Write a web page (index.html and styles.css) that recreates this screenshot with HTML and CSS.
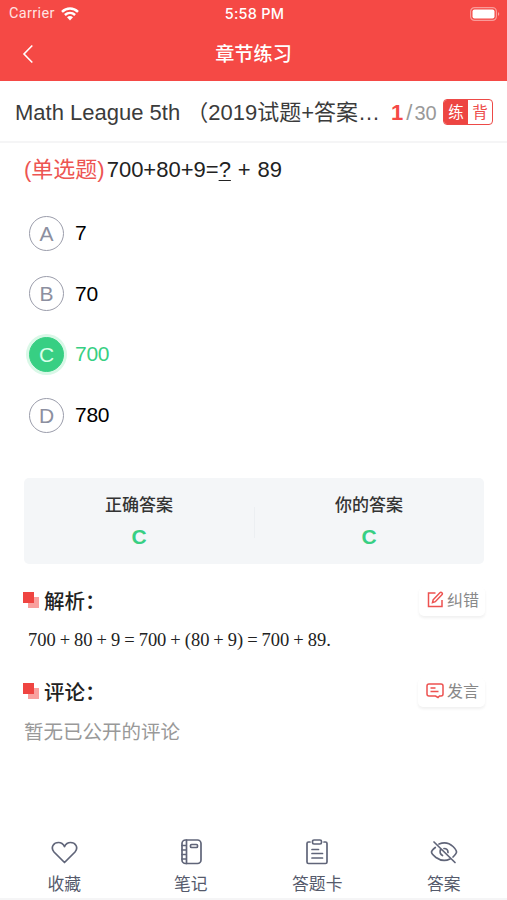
FILE: index.html
```html
<!DOCTYPE html>
<html lang="zh-CN">
<head>
<meta charset="utf-8">
<title>章节练习</title>
<link rel="stylesheet" href="styles.css">
</head>
<body>
<header class="header">
  <div class="status">
    <div class="carrier"><span>Carrier</span>
      <svg class="wifi" width="18" height="14" viewBox="0 0 18 14" fill="none" stroke="#fff" stroke-width="2.5"><path d="M1 4.800C5.600.4 12.400.4 17 4.800M3.900 8C7 5.200 11 5.200 14.100 8"/><path d="M9 13.500 6 10.300Q9 7.900 12 10.300Z" fill="#fff" stroke="none"/></svg>
    </div>
    <div class="clock">5:58 PM</div>
    <div class="power"><svg width="30" height="14" viewBox="0 0 30 14"><rect x=".6" y=".6" width="25.800" height="12.800" rx="4" fill="none" stroke="#fff" stroke-opacity=".45" stroke-width="1.200"/><rect x="2.500" y="2.500" width="22" height="9" rx="2" fill="#fff"/><path d="M28 5Q30.500 7 28 9Z" fill="#fff" opacity=".5"/></svg></div>
  </div>
  <div class="nav">
    <svg class="back" width="12" height="20" viewBox="0 0 12 20" fill="none" stroke="#fff" stroke-width="1.600"><path d="M10.300 1.500 2 10l8.300 8.500"/></svg>
    <h1>章节练习</h1>
  </div>
</header>
<div class="paper">
  <div class="name">Math League 5th （2019试题+答案…</div>
  <div class="count"><b>1</b><i>/</i>30</div>
  <div class="mode"><span class="on">练</span><span>背</span></div>
</div>
<main>
  <p class="question"><span class="kind">(单选题)</span>700+80+9=<u>?</u> + 89</p>
  <ul class="options">
    <li><span class="letter">A</span>7</li>
    <li><span class="letter">B</span>70</li>
    <li class="right"><span class="letter">C</span>700</li>
    <li><span class="letter">D</span>780</li>
  </ul>
  <div class="answers">
    <div><h3>正确答案</h3><b>C</b></div>
    <div><h3>你的答案</h3><b>C</b></div>
  </div>
  <section class="analysis">
    <div class="heading"><span class="mark"></span><h2>解析：</h2>
      <button class="fix"><svg width="17" height="17" viewBox="0 0 17 17" fill="none" stroke="#ed5250" stroke-width="1.500"><path d="M8.500 2H1.500v13.500H15V9"/><path d="m6.200 8.700 6.700-6.900q1-1 2 0t0 2L8.300 10.700l-2.800 1Z"/></svg>纠错</button>
    </div>
    <p class="formula">700 + 80 + 9 = 700 + (80 + 9) = 700 + 89.</p>
  </section>
  <section class="comments">
    <div class="heading"><span class="mark"></span><h2>评论：</h2>
      <button class="speak"><svg width="18" height="17" viewBox="0 0 18 17" fill="none" stroke="#ed5250" stroke-width="1.500"><path d="M9.500 14H3q-2 0-2-2V4q0-2 2-2h12q2 0 2 2v8q0 2-2 2h-1.500L12 15.500ZM4.500 6h5M4.500 9.500h8"/></svg>发言</button>
    </div>
    <p class="empty">暂无已公开的评论</p>
  </section>
</main>
<footer class="tabs">
  <div><svg width="28" height="28" viewBox="0 0 28 28"><path d="M14.500 24.500 4 14C0 9 4 4.500 8.500 4.500q4 0 6 4 2-4 6-4C25 4.500 29 9 25 14Z"/></svg>收藏</div>
  <div><svg width="28" height="28" viewBox="0 0 28 28"><rect x="5" y="2" width="19" height="23.500" rx="3.500"/><path d="M9.500 2v23.500M5 7.500h4.500M5 12h4.500M5 16.500h4.500M5 21h4.500"/><rect x="13.500" y="6.500" width="7" height="3" rx="1"/></svg>笔记</div>
  <div><svg width="28" height="28" viewBox="0 0 28 28"><path d="M7 4H5.500Q4 4 4 5.500V24q0 1.500 1.500 1.500h17Q24 25.500 24 24V5.500Q24 4 22.500 4H21"/><rect x="9.500" y="2" width="9" height="4" rx="1.500"/><path d="M9 11.500h6.500M9 15.500h10.500M9 20h10.500"/></svg>答题卡</div>
  <div><svg width="28" height="28" viewBox="0 0 28 28"><path d="M5.300 9.500Q1.500 12.500 1.500 14q0 2 4.500 5.500 7 5 14 1.500M9 6Q17 2.800 23 8.500q3.500 3.500 3.500 5.500 0 1.500-3.500 5M4 4 25 24.500M10.500 11.500q-1.500 4 2 6M14 10.500q4 0 4 4"/></svg>答案</div>
</footer>
</body>
</html>
```

FILE: styles.css
```css
* { box-sizing: border-box; margin: 0; padding: 0; }
body {
  width: 507px; height: 900px; overflow: hidden;
  display: flex; flex-direction: column;
  background: #fff; color: #333;
  font-family: "Liberation Sans", "Noto Sans CJK SC", sans-serif;
}
.header { height: 81px; flex: none; background: #f54945; color: #fff; }
.status { height: 27px; padding: 0 7px 0 9px; display: grid; grid-template-columns: 1fr auto 1fr; align-items: center; }
.carrier { display: flex; align-items: center; gap: 6px; font: 14.500px/27px Roboto, sans-serif; letter-spacing: .35px; color: #ffe3e2; }
.clock { font: 500 14.500px/27px Inter, sans-serif; letter-spacing: .2px; }
.power { display: flex; justify-content: flex-end; }
.nav { height: 53px; padding: 0 22px; display: grid; grid-template-columns: 1fr auto 1fr; align-items: center; }
.nav h1 { padding-top: 2px; font-size: 19.200px; line-height: 28px; font-weight: 500; }
.paper { height: 62px; flex: none; padding: 0 14px 0 15px; display: flex; align-items: center; border-bottom: 2px solid #f5f5f6; }
.name { width: 376px; padding-top: 4px; font-size: 22px; line-height: 32px; white-space: nowrap; color: #3b3b3b; }
.count { width: 52px; padding-top: 3px; display: flex; align-items: center; font-size: 20px; line-height: 32px; color: #999; }
.count b { font-size: 22px; color: #f54945; }
.count i { font-style: normal; font-size: 22px; margin: 0 2px 0 3px; }
.mode { width: 50px; height: 26px; margin-top: 2px; display: flex; flex: none; border: 1px solid #ed4a47; border-radius: 4px; overflow: hidden; color: #ed4a47; font-size: 15.500px; line-height: 25px; text-align: center; }
.mode span { flex: 1; }
.mode .on { background: #ed4542; color: #fff; }
main { flex: 1; padding: 11px 23px 0 24px; }
.question { height: 32px; font-size: 22px; line-height: 32px; color: #222; white-space: nowrap; word-spacing: .8px; }
.kind { color: #ed5552; margin-right: 2px; }
.question u { text-decoration-thickness: 1px; text-underline-offset: 3px; }
.options { list-style: none; padding: 17px 0 0 5px; }
.options li { height: 60.600px; display: flex; align-items: center; gap: 11px; font-size: 21px; line-height: 26px; letter-spacing: -.3px; color: #000; }
.letter { width: 35px; height: 35px; border: 1.500px solid #9b9dab; border-radius: 50%; line-height: 33px; text-align: center; color: #8c8fa0; letter-spacing: 0; }
.options .right { color: #37cf83; }
.right .letter { background: #37cf83; border-color: #37cf83; color: #d9ffe9; box-shadow: 0 0 0 3px #d9f8e7; }
.answers { height: 86px; margin-top: 33px; display: flex; align-items: center; background: #f4f6f8; border-radius: 5px; text-align: center; }
.answers div { flex: 1; height: 64px; }
.answers div + div { background: linear-gradient(#eceff2, #eceff2) 0 18px / 1px 31px no-repeat; }
.answers h3 { padding-top: 1px; font-size: 17px; font-weight: 500; line-height: 31px; color: #333; }
.answers b { display: block; font-size: 21px; line-height: 32px; color: #37cf83; }
.analysis { padding-top: 20px; height: 111px; }
.heading { height: 34px; display: flex; align-items: center; }
.mark { width: 16px; height: 16px; margin: 0 5px 2px -1px; background: linear-gradient(#ef4441, #ef4441) 0 0 / 11px 11px no-repeat, linear-gradient(#f9a09e, #f9a09e) 100% 100% / 11px 11px no-repeat; }
.heading h2 { padding-top: 2px; font-size: 20.500px; line-height: 34px; font-weight: 500; color: #222; }
button { margin: 0 -1px 0 auto; height: 29px; display: flex; align-items: center; border: 0; border-radius: 5px; background: #fff; box-shadow: 0 2px 3px #f0f0f0; color: #888; font: 16px/30px "Liberation Sans", "Noto Sans CJK SC", sans-serif; padding: 0 6px 0 8px; gap: 3px; }
button svg { margin-bottom: 4px; }
.formula { margin: 8px 0 0 4px; font: 18.500px/28px "Liberation Serif", serif; word-spacing: -.6px; letter-spacing: -.02px; color: #222; white-space: nowrap; }
.empty { margin-top: 8px; font-size: 19.500px; line-height: 30px; color: #999; }
.tabs { height: 70px; flex: none; padding: 8px 0 0 1px; display: flex; border-bottom: 2px solid #f5f5f6; }
.tabs div { flex: 1; display: flex; flex-direction: column; align-items: center; gap: 4px; font-size: 16.800px; line-height: 30px; color: #555a6b; }
.tabs svg { flex: none; fill: none; stroke: #606579; stroke-width: 1.700; stroke-linecap: round; stroke-linejoin: round; }
```
